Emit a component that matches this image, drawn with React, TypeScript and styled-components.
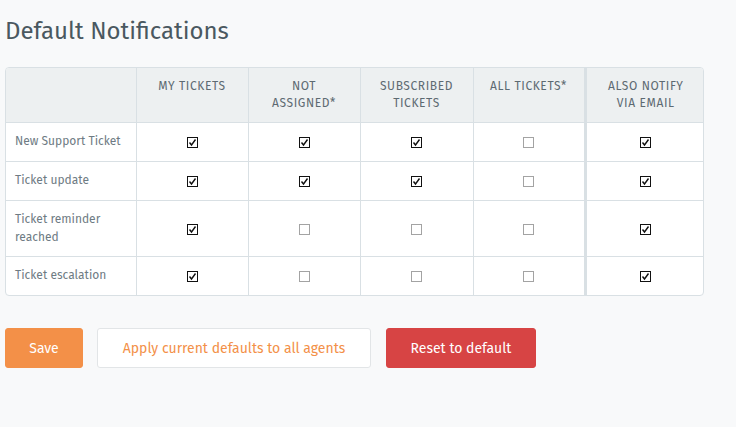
import React from "react";
import styled, { createGlobalStyle } from "styled-components";

const Global = createGlobalStyle`
  html, body { margin: 0; padding: 0; background: #f8f9fa; }
  body { font-family: "Fira Sans", "Open Sans", "Liberation Sans", sans-serif; }
`;

const Page = styled.div`
  padding: 16px 5px 0 5px;
  width: 699px;
`;

const Title = styled.h1`
  margin: 0 0 21px 0;
  font-size: 24px;
  line-height: 30px;
  font-weight: 400;
  color: #4a5860;
`;

const TableWrap = styled.div`
  border: 1px solid #d9e0e4;
  border-radius: 4px;
  overflow: hidden;
  background: #fff;
`;

const Table = styled.table`
  width: 100%;
  border-collapse: collapse;
  table-layout: fixed;
`;

const Th = styled.th<{ $sep?: boolean }>`
  box-sizing: border-box;
  background: #edf0f1;
  color: #5d6a72;
  font-size: 12px;
  font-weight: 400;
  letter-spacing: 0.05em;
  text-transform: uppercase;
  line-height: 17px;
  vertical-align: top;
  text-align: center;
  padding: 10px 12px;
  height: 54px;
  border-right: 1px solid #d9e0e4;
  border-bottom: 1px solid #d9e0e4;
  ${(p) => (p.$sep ? "border-left: 3px solid #d9e0e4;" : "")}
  &:last-child { border-right: none; }
`;

const Td = styled.td<{ $sep?: boolean }>`
  box-sizing: border-box;
  border-right: 1px solid #d9e0e4;
  border-bottom: 1px solid #d9e0e4;
  text-align: center;
  vertical-align: middle;
  padding: 10px 10px;
  line-height: 18px;
  ${(p) => (p.$sep ? "border-left: 3px solid #d9e0e4;" : "")}
  &:last-child { border-right: none; }
`;

const LabelTd = styled(Td)`
  text-align: left;
  font-size: 12px;
  line-height: 17.5px;
  color: #6e7b83;
  padding: 10px 9px;
`;

const Row = styled.tr`
  &:last-child td { border-bottom: none; }
`;

const Box = styled.span<{ $on: boolean }>`
  display: inline-block;
  width: 11px;
  height: 11px;
  box-sizing: border-box;
  border: 1px solid ${(p) => (p.$on ? "#111" : "#a3a3a3")};
  background: #fff;
  vertical-align: middle;
  position: relative;
  svg { position: absolute; left: 0; top: 0; }
`;

const Buttons = styled.div`
  display: flex;
  margin-top: 32px;
`;

const Btn = styled.button<{ $kind: "save" | "plain" | "danger" }>`
  height: 40px;
  box-sizing: border-box;
  border-radius: 3px;
  font-family: inherit;
  font-size: 14px;
  padding: 0 10px;
  white-space: nowrap;
  cursor: pointer;
  border: 1px solid
    ${(p) => (p.$kind === "plain" ? "#e2e5e7" : p.$kind === "save" ? "#f39048" : "#d74444")};
  background: ${(p) => (p.$kind === "plain" ? "#fff" : p.$kind === "save" ? "#f39048" : "#d74444")};
  color: ${(p) => (p.$kind === "plain" ? "#f39048" : "#fff")};
`;

const SaveBtn = styled(Btn)`
  width: 78px;
  margin-right: 14px;
`;
const ApplyBtn = styled(Btn)`
  width: 274px;
  margin-right: 15px;
`;
const ResetBtn = styled(Btn)`
  width: 150px;
`;

const Check = ({ on }: { on: boolean }) => (
  <Box $on={on}>
    {on && (
      <svg width="9" height="9" viewBox="0 0 9 9">
        <path d="M1.5 4.5 L3.5 7 L7.5 1.5" stroke="#111" strokeWidth="1.4" fill="none" />
      </svg>
    )}
  </Box>
);

const cols: { label: string; w: number; sep?: boolean }[] = [
  { label: "My Tickets", w: 112 },
  { label: "Not Assigned*", w: 112 },
  { label: "Subscribed Tickets", w: 113 },
  { label: "All Tickets*", w: 112 },
  { label: "Also notify via email", w: 120, sep: true },
];

const rows: { label: string; v: boolean[] }[] = [
  { label: "New Support Ticket", v: [true, true, true, false, true] },
  { label: "Ticket update", v: [true, true, true, false, true] },
  { label: "Ticket reminder reached", v: [true, false, false, false, true] },
  { label: "Ticket escalation", v: [true, false, false, false, true] },
];

export default function App() {
  return (
    <Page>
      <Global />
      <Title>Default Notifications</Title>
      <TableWrap>
        <Table>
          <colgroup>
            <col style={{ width: 130 }} />
            {cols.map((c) => (
              <col key={c.label} style={{ width: c.w }} />
            ))}
          </colgroup>
          <thead>
            <tr>
              <Th />
              {cols.map((c) => (
                <Th key={c.label} $sep={c.sep}>
                  {c.label}
                </Th>
              ))}
            </tr>
          </thead>
          <tbody>
            {rows.map((r) => (
              <Row key={r.label}>
                <LabelTd>{r.label}</LabelTd>
                {r.v.map((on, i) => (
                  <Td key={i} $sep={cols[i].sep}>
                    <Check on={on} />
                  </Td>
                ))}
              </Row>
            ))}
          </tbody>
        </Table>
      </TableWrap>
      <Buttons>
        <SaveBtn $kind="save">Save</SaveBtn>
        <ApplyBtn $kind="plain">Apply current defaults to all agents</ApplyBtn>
        <ResetBtn $kind="danger">Reset to default</ResetBtn>
      </Buttons>
    </Page>
  );
}
